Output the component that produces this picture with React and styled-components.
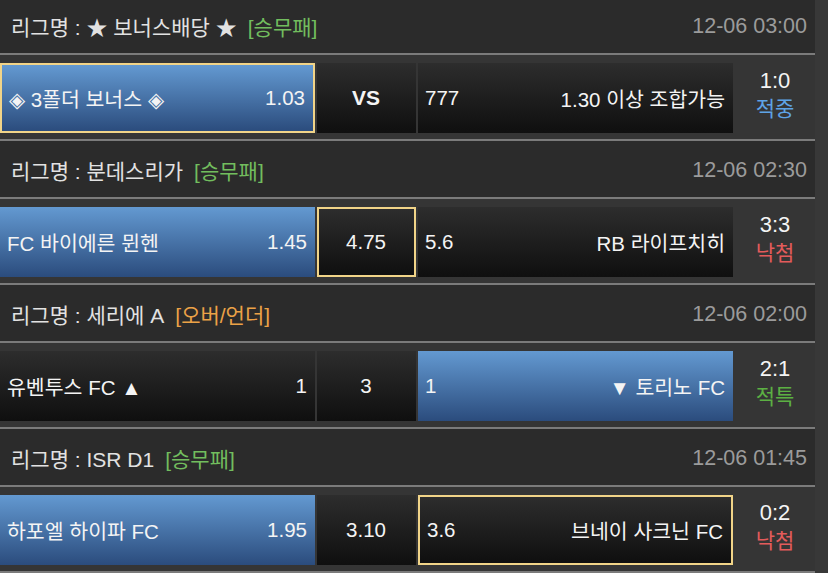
import React from "react";
import styled, { createGlobalStyle, css } from "styled-components";

const GlobalStyle = createGlobalStyle`
  body {
    margin: 0;
    background: #383838;
    font-family: "Liberation Sans", "Noto Sans CJK KR", sans-serif;
    color: #f2f2f2;
    overflow: hidden;
  }
`;

const List = styled.div`
  width: 815px;
  margin-top: -3px;
`;

const Header = styled.div`
  height: 58px;
  box-sizing: border-box;
  padding: 2px 8px 0 11px;
  display: flex;
  align-items: center;
  justify-content: space-between;
  background: #2b2b2b;
  border-bottom: 2px solid #7b7b7b;
  font-size: 21px;
`;

const League = styled.div`
  color: #e2e2e2;
`;

const typeColors = {
  green: "#72bd5e",
  orange: "#eba247",
};

const BetType = styled.span`
  margin-left: 11px;
  color: ${(p) => typeColors[p.$tone]};
`;

const Time = styled.div`
  color: #9b9b9b;
  font-size: 21.5px;
`;

const Row = styled.div`
  display: flex;
  gap: 2px;
  padding: 8px 0 6px;
  background: #353535;
  border-bottom: 2px solid #7b7b7b;
`;

const Cell = styled.div`
  height: 70px;
  box-sizing: border-box;
  display: flex;
  align-items: center;
  justify-content: ${(p) => (p.$center ? "center" : "space-between")};
  width: ${(p) => p.$w}px;
  padding: 0 8px 0 7px;
  font-size: 20.5px;
  color: #f4f4f4;
  background: linear-gradient(#2d2d2d, #0f0f0f);
  ${(p) =>
    p.$win &&
    css`
      background: linear-gradient(#6399d1, #2b4c7d);
    `}
  ${(p) =>
    p.$pick &&
    css`
      border: 2px solid #f1d488;
    `}
`;

const Vs = styled.span`
  font-weight: bold;
  font-size: 21px;
`;

const ScoreBox = styled.div`
  flex: 1;
  display: flex;
  flex-direction: column;
  align-items: center;
  justify-content: center;
  line-height: 28px;
  padding-bottom: 6px;
`;

const Score = styled.div`
  font-size: 22px;
  color: #f4f4f4;
`;

const statusColors = {
  적중: "#5ea3e6",
  낙첨: "#e35b5b",
  적특: "#5cb043",
};

const Status = styled.div`
  font-size: 21px;
  color: ${(p) => statusColors[p.$s]};
`;

const matches = [
  {
    league: "★ 보너스배당 ★",
    type: "승무패",
    tone: "green",
    time: "12-06 03:00",
    home: "◈ 3폴더 보너스 ◈",
    homeOdd: "1.03",
    draw: "VS",
    awayOdd: "777",
    away: "1.30 이상 조합가능",
    win: "home",
    pick: "home",
    score: "1:0",
    status: "적중",
  },
  {
    league: "분데스리가",
    type: "승무패",
    tone: "green",
    time: "12-06 02:30",
    home: "FC 바이에른 뮌헨",
    homeOdd: "1.45",
    draw: "4.75",
    awayOdd: "5.6",
    away: "RB 라이프치히",
    win: "home",
    pick: "draw",
    score: "3:3",
    status: "낙첨",
  },
  {
    league: "세리에 A",
    type: "오버/언더",
    tone: "orange",
    time: "12-06 02:00",
    home: "유벤투스 FC ▲",
    homeOdd: "1",
    draw: "3",
    awayOdd: "1",
    away: "▼ 토리노 FC",
    win: "away",
    pick: null,
    score: "2:1",
    status: "적특",
  },
  {
    league: "ISR D1",
    type: "승무패",
    tone: "green",
    time: "12-06 01:45",
    home: "하포엘 하이파 FC",
    homeOdd: "1.95",
    draw: "3.10",
    awayOdd: "3.6",
    away: "브네이 사크닌 FC",
    win: "home",
    pick: "away",
    score: "0:2",
    status: "낙첨",
  },
];

const Match = ({ m }) => (
  <>
    <Header>
      <League>
        리그명 : {m.league}
        <BetType $tone={m.tone}>[{m.type}]</BetType>
      </League>
      <Time>{m.time}</Time>
    </Header>
    <Row>
      <Cell $w={315} $win={m.win === "home"} $pick={m.pick === "home"}>
        <span>{m.home}</span>
        <span>{m.homeOdd}</span>
      </Cell>
      <Cell $w={99} $center $pick={m.pick === "draw"}>
        {m.draw === "VS" ? <Vs>VS</Vs> : m.draw}
      </Cell>
      <Cell $w={315} $win={m.win === "away"} $pick={m.pick === "away"}>
        <span>{m.awayOdd}</span>
        <span>{m.away}</span>
      </Cell>
      <ScoreBox>
        <Score>{m.score}</Score>
        <Status $s={m.status}>{m.status}</Status>
      </ScoreBox>
    </Row>
  </>
);

export default function App() {
  return (
    <>
      <GlobalStyle />
      <List>
        {matches.map((m) => (
          <Match key={m.time} m={m} />
        ))}
      </List>
    </>
  );
}
